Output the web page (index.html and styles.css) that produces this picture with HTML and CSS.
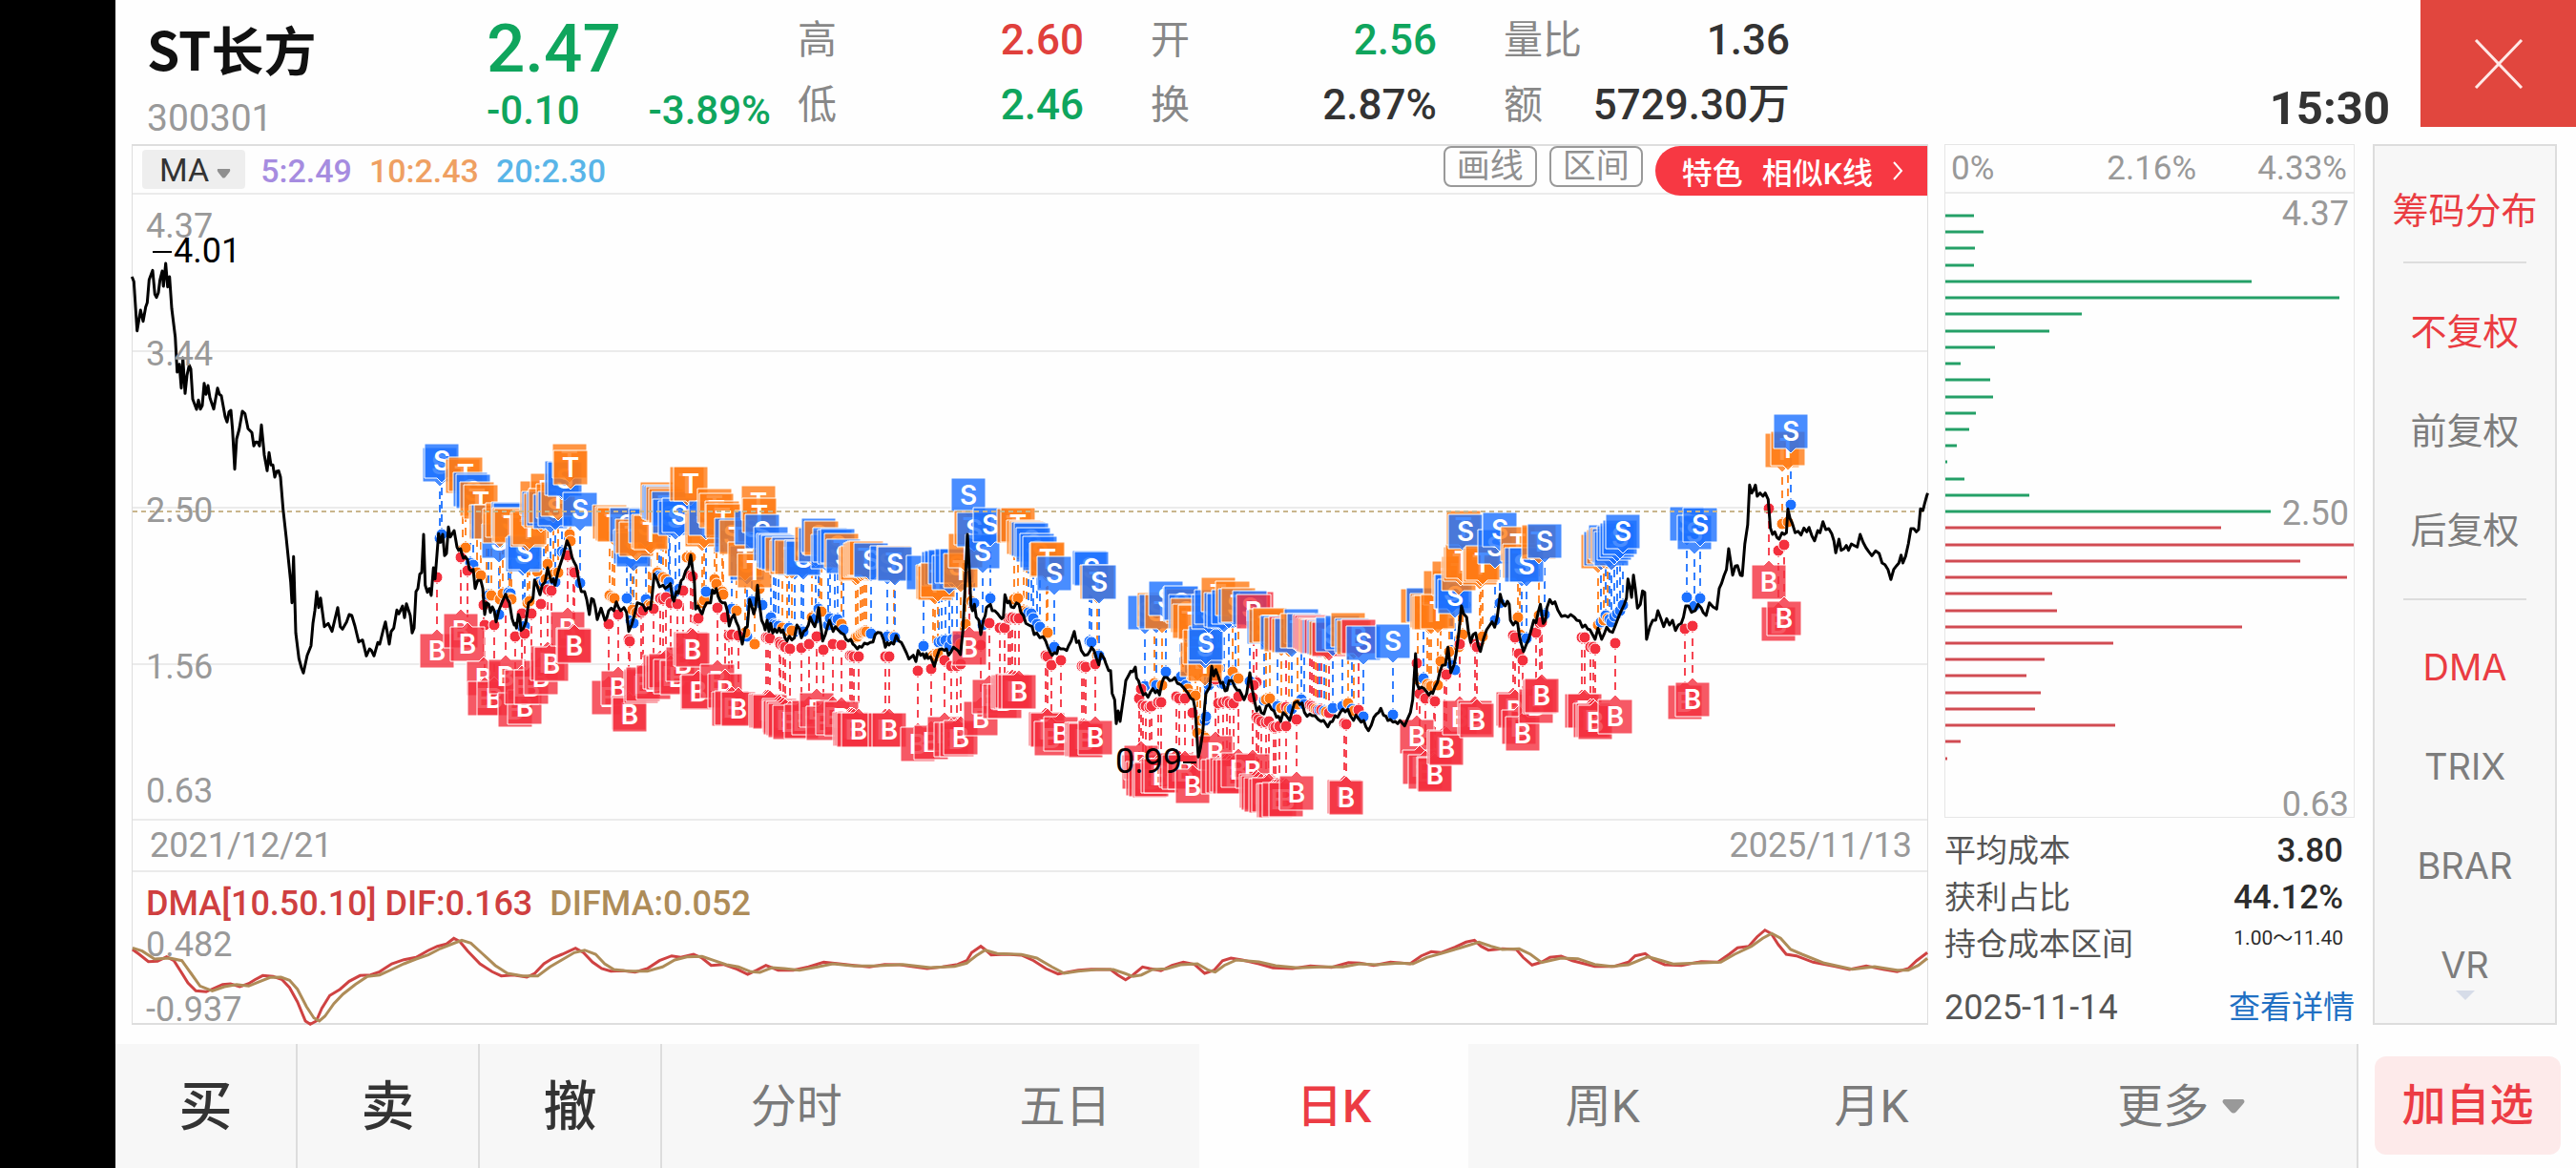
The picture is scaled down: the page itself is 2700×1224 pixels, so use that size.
FILE: index.html
```html
<!DOCTYPE html>
<html lang="zh-CN">
<head>
<meta charset="utf-8">
<meta name="viewport" content="width=device-width, initial-scale=1">
<title>ST长方 300301 日K</title>
<link rel="stylesheet" href="styles.css">
</head>
<body>
<div class="app">
  <header class="quote">
    <div class="quote-name">
      <h1 class="name">ST长方</h1>
      <div class="code">300301</div>
    </div>
    <div class="quote-price">
      <div class="price">2.47</div>
      <div class="change"><span>-0.10</span><span>-3.89%</span></div>
    </div>
    <dl class="metrics">
      <div class="metric"><dt>高</dt><dd class="up">2.60</dd></div>
      <div class="metric"><dt>开</dt><dd class="down">2.56</dd></div>
      <div class="metric"><dt>量比</dt><dd>1.36</dd></div>
      <div class="metric"><dt>低</dt><dd class="down">2.46</dd></div>
      <div class="metric"><dt>换</dt><dd>2.87%</dd></div>
      <div class="metric"><dt>额</dt><dd>5729.30万</dd></div>
    </dl>
    <time class="clock">15:30</time>
    <button class="close" type="button" aria-label="关闭">
      <svg width="52" height="52" viewBox="0 0 52 52"><path d="M2 1 50 51M50 1 2 51" stroke="#ffe9e7" stroke-width="3" fill="none"/></svg>
    </button>
  </header>

  <main class="main">
    <section class="chart">
      <div class="toolbar">
        <button class="ma-select" type="button">MA <svg width="15" height="10" viewBox="0 0 15 10"><path d="M1 0h13q1 2-1 4L9 9q-2 1-3 0L2 4Q0 2 1 0z" fill="#8f8f8f"/></svg></button>
        <span class="ma5">5:2.49</span>
        <span class="ma10">10:2.43</span>
        <span class="ma20">20:2.30</span>
        <div class="tools">
          <button class="tool" type="button">画线</button>
          <button class="tool" type="button">区间</button>
          <button class="similar" type="button"><span>特色</span><span>相似K线</span>
            <svg width="12" height="22" viewBox="0 0 12 22"><path d="M2 2l8 9-8 9" stroke="#fff" stroke-width="2" fill="none"/></svg></button>
        </div>
      </div>
      <svg class="plot" id="kline" viewBox="139 204 1881 654" role="img" aria-label="日K走势">
        <g class="grid"><path d="M139 368h1881M139 532h1881M139 696h1881"/></g>
        <g id="stems"></g>
        <g id="dots"></g>
        <g id="badges"></g>
        <path class="cost" d="M139 536h1881"/>
        <path id="price" class="price-line"/>
        <g class="axis">
          <text x="153" y="249">4.37</text>
          <text x="153" y="383">3.44</text>
          <text x="153" y="547">2.50</text>
          <text x="153" y="711">1.56</text>
          <text x="153" y="841">0.63</text>
        </g>
        <g class="extreme">
          <path d="M160 264h20M1240 799h14"/>
          <text x="182" y="275">4.01</text>
          <text x="1169" y="810">0.99</text>
        </g>
      </svg>
      <div class="dates"><span>2021/12/21</span><span>2025/11/13</span></div>
      <div class="dma-head"><span class="dif">DMA[10.50.10] DIF:0.163</span><span class="difma">DIFMA:0.052</span></div>
      <svg class="plot" viewBox="139 970 1881 102" role="img" aria-label="DMA指标">
        <g class="axis">
          <text x="153" y="1002">0.482</text>
          <text x="153" y="1070">-0.937</text>
        </g>
        <path id="dif" class="dif-line"/>
        <path id="difma" class="difma-line"/>
      </svg>
    </section>

    <section class="chips">
      <div class="chips-box">
        <div class="chips-head"><span>0%</span><span>2.16%</span><span>4.33%</span></div>
        <svg class="plot" viewBox="2039 204 428 653" role="img" aria-label="筹码分布">
          <g id="chipbars"></g>
          <g class="axis axis-end">
            <text x="2462" y="237">4.37</text>
            <text x="2462" y="551">2.50</text>
            <text x="2462" y="856">0.63</text>
          </g>
        </svg>
      </div>
      <dl class="stats">
        <div class="stat"><dt>平均成本</dt><dd>3.80</dd></div>
        <div class="stat"><dt>获利占比</dt><dd>44.12%</dd></div>
        <div class="stat"><dt>持仓成本区间</dt><dd class="range">1.00～11.40</dd></div>
      </dl>
      <div class="chips-foot"><time>2025-11-14</time><a href="#detail">查看详情</a></div>
    </section>

    <aside class="side">
      <button type="button" class="on">筹码分布</button>
      <hr class="first">
      <button type="button" class="on">不复权</button>
      <button type="button">前复权</button>
      <button type="button">后复权</button>
      <hr>
      <button type="button" class="on">DMA</button>
      <button type="button">TRIX</button>
      <button type="button">BRAR</button>
      <button type="button" class="last">VR<svg class="more-down" width="20" height="10" viewBox="0 0 20 10"><path d="M0 0h20L10 10z" fill="#d6dce8"/></svg></button>
    </aside>
  </main>

  <footer class="bottom">
    <div class="trade">
      <button type="button">买</button>
      <button type="button">卖</button>
      <button type="button">撤</button>
    </div>
    <nav class="periods">
      <button type="button">分时</button>
      <button type="button">五日</button>
      <button type="button" class="current">日K</button>
      <button type="button">周K</button>
      <button type="button">月K</button>
      <button type="button" class="more">更多 <svg width="24" height="15" viewBox="0 0 24 15"><path d="M2 0h20q3 2 0 5l-7 8q-3 3-6 0L2 5Q-1 2 2 0z" fill="#999"/></svg></button>
    </nav>
    <div class="watch"><button type="button">加自选</button></div>
  </footer>
</div>
<script src="chart.js"></script>
</body>
</html>
```

FILE: styles.css
```css
* { box-sizing: border-box; }

body {
  margin: 0;
  background: #000;
  color: #333;
  font-family: Roboto, "Noto Sans CJK SC", sans-serif;
  font-size: 36px;
}

button {
  margin: 0;
  padding: 0;
  border: 0;
  background: none;
  color: inherit;
  font: inherit;
}

h1, dl, dd { margin: 0; }

.app {
  display: flex;
  flex-direction: column;
  min-height: 100vh;
  margin-left: 121px;
  background: #fefefe;
}

/* quote header */
.quote {
  display: flex;
  align-items: flex-start;
  height: 151px;
  padding-left: 33px;
}
.quote-name { width: 356px; padding-top: 18px; }
.name {
  font: 700 55px/64px "Noto Sans CJK SC", sans-serif;
  color: #111;
}
.code { margin-top: 18px; font-size: 39px; line-height: 48px; color: #999; }
.quote-price { width: 326px; padding-top: 18px; color: #0fa55d; font-weight: 500; }
.price { font-size: 71px; line-height: 66px; }
.change {
  display: flex;
  justify-content: space-between;
  margin-top: 8px;
  padding-right: 28px;
  font-size: 42px;
  line-height: 48px;
}
.metrics {
  display: grid;
  grid-template-columns: repeat(3, 300px);
  column-gap: 70px;
  padding-top: 8px;
  line-height: 68px;
}
.metric { display: flex; justify-content: space-between; }
.metric dt { font-size: 41px; color: #888; }
.metric dd { font-size: 44px; font-weight: 500; }
.metric .up { color: #e0403c; }
.metric .down { color: #0fa55d; }
.clock {
  margin: 84px 32px 0 auto;
  font-size: 49px;
  font-weight: 700;
  line-height: 60px;
}
.close {
  display: flex;
  align-items: center;
  justify-content: center;
  width: 163px;
  height: 133px;
  background: #e1463e;
}

/* main row */
.main {
  display: flex;
  gap: 17px;
  padding: 0 20px 0 17px;
}
.plot { display: block; width: 100%; height: auto; overflow: visible; }

.chart { flex: 1; border: 2px solid #dedede; border-width: 2px 1px; }
.toolbar {
  display: flex;
  align-items: center;
  gap: 18px;
  height: 51px;
  padding-left: 10px;
  border-bottom: 2px solid #ebebeb;
  font-size: 34px;
  font-weight: 500;
}
.ma-select {
  display: flex;
  align-items: center;
  gap: 8px;
  height: 41px;
  margin-right: -2px;
  padding: 0 15px 0 18px;
  border-radius: 4px;
  background: #eee;
  font-weight: 400;
}
.ma-select svg { margin-top: 8px; }
.ma5, .ma10, .ma20 { padding-top: 3px; }
.ma5 { color: #a68ce0; }
.ma10 { color: #efa062; }
.ma20 { color: #59b5e8; }
.tools { display: flex; gap: 13px; height: 100%; margin-left: auto; }
.tool {
  width: 98px;
  height: 43px;
  border: 2px solid #999;
  border-radius: 8px;
  color: #909090;
  font-size: 35px;
  font-weight: 400;
  line-height: 38px;
}
.similar {
  display: flex;
  align-items: center;
  gap: 20px;
  height: 52px;
  padding: 0 25px 0 28px;
  border-radius: 26px 0 0 26px;
  background: #f73843;
  color: #fff;
  font-size: 32px;
}

.grid path { stroke: #ebebeb; stroke-width: 2; }
.cost { stroke: #c9b68c; stroke-width: 2; stroke-dasharray: 5 4; }
.price-line { fill: none; stroke: #000; stroke-width: 3; stroke-linejoin: round; }
.axis text { fill: #999; font-size: 36px; }
.axis-end text { text-anchor: end; }
.extreme text { fill: #000; font-size: 36px; }
.extreme path { stroke: #000; stroke-width: 2; }

.stem { stroke-width: 2; stroke-dasharray: 8 6; stroke-opacity: .9; }
.dot { stroke: #fff; stroke-width: 1; }
.badge path { stroke: #fff; stroke-width: 1; fill-opacity: .8; }
.badge text {
  fill: #fff;
  font: 600 28px Inter, sans-serif;
  text-anchor: middle;
}

.dates {
  display: flex;
  justify-content: space-between;
  padding: 0 16px 0 18px;
  border-top: 2px solid #ebebeb;
  border-bottom: 2px solid #ebebeb;
  color: #999;
  line-height: 52px;
}
.dma-head {
  display: flex;
  gap: 18px;
  height: 56px;
  padding: 5px 0 0 14px;
  line-height: 56px;
  font-weight: 500;
}
.dif { color: #cf3f40; }
.difma { color: #ae8c58; }
.dif-line, .difma-line { fill: none; stroke-width: 3; }
.dif-line { stroke: #cf4242; }
.difma-line { stroke: #ae8c58; }

/* chip distribution */
.chips { width: 430px; margin-right: 2px; }
.chips-box { border: 1px solid #e6e6e6; }
.chips-head {
  display: flex;
  justify-content: space-between;
  padding: 0 7px 0 6px;
  border-bottom: 2px solid #ebebeb;
  color: #999;
  font-size: 35px;
  line-height: 49px;
}
.chips-head span:nth-child(2) { margin-left: 54px; }
.gain { stroke: #24a067; stroke-width: 3; }
.loss { stroke: #d14b52; stroke-width: 3; }
.stats { padding-top: 10px; }
.stat {
  display: flex;
  justify-content: space-between;
  padding-right: 12px;
  line-height: 49px;
}
.stat dt { font-size: 33px; color: #555; }
.stat dd { font-size: 35px; font-weight: 500; color: #2c2c2c; }
.stat .range { font-size: 21px; font-weight: 400; line-height: 36px; }
.chips-foot {
  display: flex;
  justify-content: space-between;
  margin-top: 24px;
  line-height: 36px;
  color: #555;
}
.chips-foot a { color: #2170c3; font-size: 33px; text-decoration: none; }

/* indicator column */
.side {
  display: flex;
  flex-direction: column;
  width: 193px;
  padding-top: 15px;
  border: 2px solid #ddd;
  background: #f7f7f7;
  font-family: Inter, "Noto Sans CJK SC", sans-serif;
  font-size: 38px;
  color: #7d7d7d;
}
.side button { height: 104px; padding-bottom: 5px; white-space: nowrap; }
.side .on { color: #ea3c42; }
.side hr {
  width: 129px;
  height: 2px;
  margin: 20px auto;
  border: 0;
  background: #ddd;
}
.side .first { margin: 2px auto 19px; }
.side .last { position: relative; }
.more-down { position: absolute; left: 50%; bottom: 17px; margin-left: -10px; }

/* bottom bar */
.bottom {
  display: flex;
  flex: 1;
  min-height: 130px;
  margin-top: 20px;
}
.bottom button { padding-bottom: 9px; }
.trade { display: flex; background: #f7f7f7; font-size: 56px; font-weight: 500; }
.trade button { width: 191px; border-right: 2px solid #ddd; }
.periods {
  display: flex;
  flex: 1;
  border-right: 2px solid #ddd;
  background: #f7f7f7;
  color: #7a7a7a;
  font-size: 48px;
}
.periods button { flex: 282 1 0; }
.periods .current { background: #fefefe; color: #ec3c44; font-weight: 500; }
.periods .more {
  display: flex;
  flex-grow: 368;
  align-items: center;
  justify-content: center;
  gap: 14px;
}
.periods svg { margin-top: 10px; }
.watch { padding: 13px 16px 14px 17px; }
.watch button {
  width: 195px;
  height: 100%;
  border-radius: 12px;
  background: #fdeaea;
  color: #ec3c44;
  font-size: 46px;
  font-weight: 500;
}
```

FILE: chart.js
```js
// Every series is stored in runs; a run has its own origin and units per pixel.
const priceRuns = [
  { x: 130, y: 240, kx: 3, pts: `25,150 31,165 41,320 52,255 60,290 68,245 73,232 79,160 90,130 97,205 102,215 108,200 113,160 120,132 124,180 131,108 137,182 143,150 150,250 161,340 167,450 174,425 180,500 185,405 192,517 198,460 205,428 210,440 216,535 228,567 234,538 240,566 246,555 252,485 258,520 264,492 270,530 282,566 294,500 300,520 306,524 318,590 324,607 330,575 336,570 341,630 348,755 354,660 362,630 372,573 380,580 390,628 402,640 408,682 414,670 420,670 426,682 432,616 441,710 450,760 456,703 462,742 468,742 474,780 480,762 486,760 492,780 500,880 510,970 518,1050 524,1110 528,1175 533,1030 540,1270 550,1350 558,1380 564,1396 576,1340 588,1310 594,1240 600,1200 606,1140 612,1190 618,1160 630,1250 642,1240 654,1265 672,1190 680,1250 687,1258 700,1235 708,1212 716,1215 726,1248 738,1298 750,1292 762,1342 772,1320 778,1325 786,1342 798,1300 804,1305 815,1260 822,1235 834,1305 840,1265 848,1255 858,1198 864,1210 876,1185 882,1222 888,1178 900,1215 906,1270 912,1255 918,1140 924,1130 930,1085 936,1080 942,960 947,1120 954,1142 960,1130 966,1152 973,1065 978,1100 989,958 995,985 1002,960 1008,1027 1014,1020 1020,937 1026,968 1038,948` },
  { x: 430, y: 440, kx: 3, pts: `147,400 152,410 158,405 162,420 167,435 173,430 180,440 186,470 192,475 198,470 204,530 212,505 222,505 228,530 234,612 240,575 247,580 252,605 258,588 264,600 270,635 278,600 288,575 300,548 306,565 312,575 320,625 327,645 331,640 334,655 340,612 345,625 348,662 356,655 364,635 372,575 380,570 386,560 391,503 398,520 408,550 415,520 424,510 432,465 438,490 444,510 449,500 455,520 464,480 470,460 480,430 493,380 502,400 508,430 514,445 522,460 532,515 538,540 548,540 555,565 563,612 570,562 576,565 582,590 588,628 600,592 612,630 618,622 624,600 632,592 640,600 648,572 655,590 662,600 672,590 680,605 687,665 696,645 706,610 714,575 722,578 732,582 740,600 748,590 755,595 760,560 767,485 775,500 784,525 795,520 802,530 812,522 818,515 824,560 829,570 837,540 843,545 852,505 858,500 866,475 876,460 882,425 888,470 893,500 897,595 904,585 914,605 918,610 924,590 932,575 944,575 950,535 956,545 962,530 968,555 975,570 982,575 990,575 997,600 1003,648 1010,625 1018,612 1025,635 1032,650 1044,705 1053,655 1060,650 1067,565 1075,590 1080,610 1086,590 1092,520` },
  { x: 780, y: 460, kx: 3, pts: `48,520 55,570 62,585 66,600 72,570 78,605 83,580 90,610 96,598 103,608 110,595 116,608 122,600 128,625 135,635 142,620 150,632 158,625 166,585 174,598 180,625 187,605 194,600 202,585 208,560 216,580 222,590 228,570 234,530 240,580 247,635 255,615 262,590 268,570 275,590 280,605 287,590 295,600 305,610 314,615 320,630 328,635 335,630 342,645 348,650 356,660 362,652 370,655 378,642 388,645 396,640 405,638 412,615 420,608 430,610 438,630 444,655 450,640 455,648 462,640 470,645 478,618 486,635 494,640 502,655 510,672 518,692 526,685 532,680 540,700 547,665 555,680 562,675 568,690 573,675 578,690 586,685 598,715 606,685 614,662 622,660 630,665 636,660 643,680 650,670 658,655 665,660 672,665 680,678 688,600 694,480 702,300 709,430 713,525 718,540 724,520 730,560 738,570 744,615 752,570 758,555 762,530 768,525 774,520 780,540 788,540 796,548 805,560 810,565 815,560 820,490 828,515 834,510 840,528 848,530 856,515 864,520 870,545 878,555 886,580 895,585 905,590 912,615 920,610 930,625 940,622 948,635 955,655 962,670 968,680 975,672 983,675 988,655 995,660 1005,660 1014,665 1020,650 1028,635 1038,605 1045,640 1052,635 1060,665 1070,680 1080,678 1088,665 1092,655 1100,665 1108,690 1115,710 1122,675 1132,690 1137,705 1146,728 1152,728 1157,800 1165,820` },
  { x: 1130, y: 580, kx: 3, pts: `120,535 126,495 132,528 140,470 145,440 150,400 158,385 166,370 172,372 180,357 184,392 190,400 196,420 205,445 212,440 220,452 228,435 235,425 243,438 250,430 256,445 264,405 270,390 280,390 288,400 296,398 304,390 312,408 322,412 330,420 338,430 346,440 354,455 362,460 368,490 378,640 385,610 392,560 398,480 402,440 408,430 414,420 420,355 427,385 433,365 440,385 448,408 455,405 462,432 468,430 475,400 484,400 492,418 500,430 508,430 515,445 522,460 530,440 540,375 548,430 556,470 562,495 570,482 576,500 584,505 592,480 600,475 608,490 616,495 624,515 630,512 637,528 645,500 655,510 665,525 672,500 680,470 690,465 697,475 704,470 712,500 720,512 728,505 736,510 745,510 755,522 764,528 772,525 785,545 793,530 800,528 808,510 816,515 824,500 832,490 840,498 848,490 856,510 866,525 874,508 882,520 890,530 898,525 905,545 913,557 922,540 930,515 938,505 945,500 952,487 960,508 968,512 974,525 982,522 990,530 997,528 1005,535 1012,525 1018,532 1027,542 1036,520 1045,500 1052,460 1056,400 1061,315 1066,410 1072,425 1080,420 1088,425 1096,435 1103,445 1110,435 1115,440 1122,420 1130,405 1138,370 1145,352 1155,350 1163,295 1172,375 1182,350 1188,320 1197,250` },
  { x: 1430, y: 420, kx: 2.613, pts: `262,690 266,645 272,670 280,680 285,725 291,760 298,735 305,730 312,770 318,788 326,750 335,720 342,708 350,695 357,712 364,680 372,608 378,635 386,645 392,630 397,640 400,690 408,705 414,695 420,700 425,740 430,765 436,788 444,765 450,750 456,725 464,690 470,698 476,665 482,640 490,700 496,690 500,650 508,625 515,638 522,632 530,658 540,678 550,675 558,680 565,672 575,680 582,690 590,692 597,712 605,705 612,718 618,720 625,735 632,750 640,715 650,750 658,730 664,712 672,725 680,728 688,705 696,680 704,660 712,640 718,620 722,560 728,590 732,618 737,548 742,590 748,652 756,640 762,598 768,602 773,750 782,710 790,690 798,690 804,660 812,685 820,710 828,685 836,705 844,690 852,722 860,705 868,700 874,680 880,645 888,645 896,665 906,660 914,640 922,650 928,665 936,675 945,635 955,648 965,655 972,590 978,575 985,550 992,530 998,465 1004,510 1009,548 1016,520 1022,518 1030,548 1035,550 1042,450 1050,390 1055,265 1061,290 1066,280 1071,265 1076,300 1084,290 1092,300 1098,290 1106,310 1112,400 1118,420 1124,412 1130,430 1136,435 1144,415 1150,420 1156,415 1160,340 1166,370 1172,385 1180,415 1188,410 1196,422 1204,400 1212,412 1218,398 1226,425 1233,440 1242,408 1248,415 1256,380 1264,405 1272,402 1280,418 1286,440 1291,478 1296,455 1300,435 1306,470 1314,465 1320,455 1326,470 1334,450 1342,455 1350,460 1358,420 1366,445 1374,462 1382,475 1390,487 1400,472 1410,480 1418,510 1426,515 1434,530 1442,562 1450,530 1458,518 1464,510 1470,485 1475,510 1482,490 1490,450 1497,402 1505,402 1512,412 1518,405 1523,340 1530,345 1534,325 1540,300 1543,290` }
];

const difRuns = [
  { x: 130, y: 840, kx: 1.568, pts: `14,465 25,480 40,503 55,502 70,488 82,500 92,530 105,570 118,595 135,598 150,585 162,575 175,573 190,582 205,572 215,560 228,547 245,550 260,560 272,585 285,630 298,690 306,700 316,690 325,650 338,610 355,590 370,565 388,547 405,545 420,535 440,510 460,497 480,490 500,468 515,455 530,448 542,430 552,440 565,470 585,510 605,535 620,548 640,545 662,552 675,540 690,510 705,492 720,480 742,461 755,475 770,505 785,525 800,533 820,532 840,536 860,525 880,500 900,485 915,490 936,480 950,492 965,515 985,512 1005,525 1025,543 1040,530 1055,515 1075,530 1100,530 1125,520 1150,505 1175,510 1200,515 1225,520 1250,512 1275,513 1300,520 1320,525 1345,520 1370,512 1385,500 1393,475 1408,455 1415,465 1425,482 1450,480 1475,483 1495,500 1515,525 1535,542` },
  { x: 1120, y: 840, kx: 1.7043, pts: `17,530 40,527 75,528 88,545 102,560 115,545 132,520 145,525 165,532 185,515 205,505 225,512 243,540 260,530 275,500 290,492 310,498 340,510 365,523 400,525 432,517 470,521 500,506 520,508 545,515 575,505 610,510 630,485 648,472 665,475 690,458 710,442 725,436 737,455 750,467 775,463 800,465 812,490 828,514 845,505 860,490 880,486 900,500 940,518 975,518 1000,505 1012,485 1030,478 1045,498 1065,513 1095,515 1130,503 1160,505 1180,480 1195,460 1215,455 1230,425 1244,404 1255,415 1268,450 1282,480 1300,485 1330,505 1370,518 1395,528 1425,517 1455,527 1480,535 1500,525 1515,500 1534,475` }
];

const difmaRuns = [
  { x: 130, y: 840, kx: 1.568, pts: `14,460 30,470 50,495 75,492 95,500 110,540 125,580 145,595 165,582 185,575 205,580 220,568 240,553 258,552 272,562 285,590 300,645 312,680 321,690 330,675 345,635 360,605 380,575 400,550 420,545 440,528 460,510 480,495 500,482 520,462 540,447 555,436 570,445 590,480 610,515 630,540 655,548 680,548 700,520 720,497 740,475 757,467 775,480 790,510 805,528 830,533 860,533 885,520 905,498 925,488 950,487 970,500 990,513 1010,520 1030,535 1045,537 1065,522 1085,525 1110,530 1140,520 1165,510 1200,517 1240,516 1280,512 1325,522 1365,518 1385,508 1400,485 1415,467 1435,478 1475,481 1500,492 1525,520 1545,540` },
  { x: 1120, y: 840, kx: 1.7043, pts: `17,533 50,528 80,528 100,540 115,550 130,545 150,528 175,526 200,513 230,510 250,530 262,536 278,515 300,498 340,504 370,516 410,523 450,520 490,520 520,510 550,513 590,508 615,510 640,490 665,478 700,460 733,442 755,455 775,465 805,463 825,480 845,506 880,492 910,494 940,512 970,518 1000,513 1035,488 1060,500 1080,511 1120,508 1165,505 1190,480 1220,455 1240,430 1256,415 1272,430 1290,465 1310,480 1350,508 1400,527 1440,519 1480,530 1500,530 1518,515 1534,493` }
];

// Trade marks: letter, centre x and the badge's outer edge.
// S, T and R hang above the price line (R is a buy drawn above), B sits below it.
const markRuns = [
  { x: 430, y: 440, kx: 3, marks: `S92,86 S98,74 T164,122 T175,116 S188,164 S199,170 T210,196 T223,203 T241,268 S247,266 T256,266 S278,327 T283,280 T290,262 S308,258 S315,262 T312,275 T317,278 S355,370 S360,362 T370,290 T376,285 T398,192 S405,225 T410,230 T433,168 S420,225 T425,215 S440,235 T450,200 S457,225 T465,195 S478,130 S487,133 T500,75 T505,95 S535,227
    T628,268 T635,272 T643,276 S680,275 S692,345 S703,353 T700,312 T710,320 S740,280 T750,296 T757,300 T777,195 S782,205 S788,208 T795,210 T805,215 S812,225 S815,250 S835,255 S845,245 T870,148 T883,147 T917,290 T925,282 S930,255 T957,215 T963,232 T980,255 T985,265 S1012,310 T1025,315 S1060,395 T1052,385 T1082,420 S1075,285 T1094,207 T1097,247 S1107,298
    B85,780 B158,717 B181,760 B230,868 B235,930 B265,930 B301,862 B330,965 B361,958 B350,895 B380,895 B410,865 B432,820 B445,823 B494,712 B512,762 B517,765 B625,926 B655,898 B687,975 B691,980 B727,890 B732,885 B765,880 B785,845 B795,850 B805,842 B820,860 B840,864 B858,823 B883,775 B889,778 B902,912 B907,908 B967,875 B990,905 B1003,962 B1010,960 B1033,962 B1120,970` },
  { x: 780, y: 460, kx: 3, marks: `S85,275 S92,298 S98,300 S108,303 T120,310 T135,318 S140,310 S160,320 T150,318 S180,318 S187,322 T212,275 S225,280 T238,255 S235,250 T242,257 S265,300 S270,278 S285,285 S295,282 T305,298 S312,315 T352,340 T358,335 T366,328 T372,325 T378,320 T384,322 S398,327 S450,335 T470,335 S475,338 S565,367 T595,395 T600,400 S612,355 S620,350 T610,390 S633,348 S645,365 S655,345 S668,345 T680,360 T697,297 S705,123 T715,225 S722,232 S750,300 S775,215 T850,218 T860,216 T880,255 T888,258 S895,260 S902,263 S908,278 S920,297 S930,305 T950,328 T955,325 S974,368 S1085,352 S1092,353 T1110,395 S1117,397
    B75,910 B80,912 B110,925 B115,930 B122,932 B128,940 B145,945 B180,942 B205,930 B229,905 B248,948 B278,930 B307,932 B332,967 B340,965 B345,968 B361,970 B445,970 B457,970 B547,1013 B589,1008 B631,980 B650,1000 B668,1000 B680,993 B709,712 B745,933 B770,865 B805,878 B818,880 B830,850 B837,848 B844,846 B852,850 B865,850 B948,966 B955,968 B967,995 B997,980 B1062,1000 B1068,998 B1075,1002 B1105,992` },
  { x: 1130, y: 580, kx: 3, marks: `S211,132 T241,122 S246,130 T265,130 S277,87 S320,105 T330,112 S325,102 S340,130 T345,140 T350,160 T370,163 T375,280 T383,240 T398,295 S398,240 S403,228 S410,130 S420,115 T440,75 S450,122 S458,125 S475,115 T487,87 S495,110 T505,108 R560,120 S540,118 R553,128 S585,178 T592,175 T602,170 S627,195 T640,200 R655,198 T662,204 S672,205 S703,173 T690,190 S712,190 R730,192 R736,196 R742,200 T748,204 R753,206 S758,208 R766,208 S774,210 T780,212 R790,215 S800,200 S832,195 T848,187 S860,205 T866,210 R883,207 S896,227 S991,222
    B192,740 B199,710 B205,762 B212,764 B225,767 B230,765 B253,752 B260,752 B310,735 B318,740 B335,742 B361,785 B433,680 B442,755 B455,752 B467,750 B478,757 B490,757 B505,735 B548,738 B560,800 B566,808 B575,812 B590,815 B600,812 B615,830 B622,830 B632,828 B655,828 B686,807 B838,820 B842,822` },
  { x: 1430, y: 420, kx: 2.613, marks: `T147,590 S163,588 T172,605 T178,612 T184,612 T210,535 T200,610 T233,505 S237,545 S240,545 S247,560 T258,488 T265,460 T268,450 T273,345 S278,357 T315,470 T320,462 T325,455 S357,405 S372,350 T420,395 T426,450 S432,462 S445,462 T478,390 S493,388 T640,420 S648,412 T655,405 S662,390 T666,400 S672,402 S676,410 S685,392 S693,385 S700,375 S707,357 S884,332 S905,360 S921,337 T1145,102 T1161,95 S1167,42
    B143,1110 B152,1205 B168,1220 B190,1228 B193,1230 B220,1142 B225,1145 B262,1050 B303,1050 B309,1058 B407,1024 B412,1028 B423,1080 B434,1100 B471,1015 B480,985 B487,980 B597,1030 B603,1028 B620,1060 B626,1060 B632,1065 B686,1048 B879,1003 B900,992 B1109,623 B1135,755 B1151,737` }
];

// Chip distribution, one bar per price level, top to bottom.
const chipGain = [30, 40, 31, 30, 321, 413, 143, 109, 52, 16, 47, 50, 32, 25, 12, 2, 20, 88, 341];
const chipLoss = [289, 428, 372, 421, 112, 117, 311, 176, 104, 85, 100, 94, 178, 16, 2];

const colors = { S: '#1c71ff', T: '#ff7a14', B: '#f4303e', R: '#f4303e' };
const NS = 'http://www.w3.org/2000/svg';

function add(parent, tag, attrs, text) {
  const node = document.createElementNS(NS, tag);
  for (const key in attrs) node.setAttribute(key, attrs[key]);
  if (text) node.textContent = text;
  parent.appendChild(node);
  return node;
}

function drawLine(id, runs) {
  const points = runs.flatMap(run => run.pts.split(/\s+/).map(pair => {
    const [px, py] = pair.split(',').map(Number);
    return (run.x + px / run.kx).toFixed(1) + ' ' + (run.y + py / 3).toFixed(1);
  }));
  document.getElementById(id).setAttribute('d', 'M' + points.join('L'));
}

function drawMark(kind, x, edge) {
  const below = kind === 'B';
  const dir = below ? 1 : -1;
  const dotY = edge - dir * 95;
  const color = colors[kind];
  const tip = edge - dir * 41;
  add(document.getElementById('stems'), 'path', { class: 'stem', stroke: color, d: `M${x} ${tip - dir * 5}V${dotY + dir * 6}` });
  add(document.getElementById('dots'), 'circle', { class: 'dot', cx: x, cy: dotY, r: 6, fill: color });
  const badge = add(document.getElementById('badges'), 'g', { class: 'badge' });
  const inner = edge - dir * 36;
  add(badge, 'path', {
    fill: color,
    d: `M${x - 18} ${edge}H${x + 18}V${inner}H${x + 5}L${x} ${tip}L${x - 5} ${inner}H${x - 18}Z`
  });
  add(badge, 'text', { x: x, y: edge - dir * 18 + 10 }, kind === 'R' ? 'B' : kind);
}

drawLine('price', priceRuns);
drawLine('dif', difRuns);
drawLine('difma', difmaRuns);

for (const run of markRuns) {
  for (const mark of run.marks.split(/\s+/)) {
    const [mx, my] = mark.slice(1).split(',').map(Number);
    drawMark(mark[0], Math.round(run.x + mx / run.kx), Math.round(run.y + my / 3));
  }
}

const chipbars = document.getElementById('chipbars');
[...chipGain, ...chipLoss].forEach((length, i) => {
  const y = Math.round(227 + i * 17.23);
  add(chipbars, 'path', { class: i < chipGain.length ? 'gain' : 'loss', d: `M2039 ${y}h${length}` });
});
```
